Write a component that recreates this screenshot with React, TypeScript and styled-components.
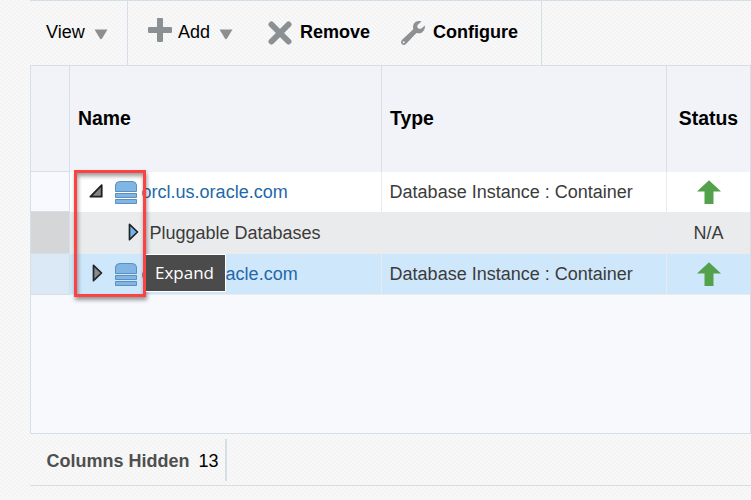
import React from "react";
import styled, { createGlobalStyle } from "styled-components";

const GlobalStyle = createGlobalStyle`
  * { box-sizing: border-box; }
  body { margin: 0; overflow: hidden; }
`;

const Page = styled.div`
  width: 751px;
  height: 500px;
  padding-left: 30px;
  overflow: hidden;
  font: 18px/20px "Liberation Sans", Arial, sans-serif;
  color: #000;
  background: linear-gradient(45deg, #f3f3f3 25%, #f9f9f9 25% 50%, #f3f3f3 50% 75%, #f9f9f9 75%) 0 0 / 4px 4px;
`;

const Toolbar = styled.div`
  display: flex;
  height: 65px;
  border-top: 1px solid #d6dfe6;
`;

const ToolGroup = styled.div<{ $width: number; $pad: number }>`
  display: flex;
  align-items: flex-start;
  width: ${(p) => p.$width}px;
  padding: 21px 0 0 ${(p) => p.$pad}px;
  border-right: 1px solid #d6dfe6;
`;

const ToolButton = styled.div<{ $bold?: boolean; $width: number }>`
  display: flex;
  flex: none;
  width: ${(p) => p.$width}px;
  white-space: nowrap;
  font-weight: ${(p) => (p.$bold ? 700 : 400)};
`;

const ToolIcon = styled.svg<{ $top: number; $gap: number }>`
  flex: none;
  display: block;
  width: 24px;
  height: 24px;
  margin: ${(p) => p.$top}px ${(p) => p.$gap}px 0 0;
`;

const Caret = styled.svg`
  display: block;
  width: 14px;
  height: 11px;
  margin: 7px 0 0 9px;
`;

const Table = styled.div`
  position: relative;
  height: 369px;
  background: #f7f9fd;
  border: 1px solid #d6dfe6;
`;

const Row = styled.div<{ $height: number; $bg: string; $color?: string }>`
  display: grid;
  grid-template-columns: 39px 312px 285px 83px;
  height: ${(p) => p.$height}px;
  background: ${(p) => p.$bg};
  color: ${(p) => p.$color ?? "#3b3b3b"};
`;

const HeadCell = styled.div<{ $center?: boolean }>`
  display: flex;
  align-items: center;
  justify-content: ${(p) => (p.$center ? "center" : "flex-start")};
  padding: 0 0 2px ${(p) => (p.$center ? 0 : 8)}px;
  font-size: 19.4px;
  font-weight: 700;
  border-right: 1px solid #d6dfe6;
  &:last-child { border-right: 0; }
`;

const RowHead = styled.div<{ $bg: string }>`
  background: ${(p) => p.$bg};
  border-right: 1px solid #d6dfe6;
  border-bottom: 1px solid #d6dfe6;
`;

const Cell = styled.div<{ $indent?: number; $center?: boolean; $ruled?: boolean }>`
  display: flex;
  align-items: center;
  justify-content: ${(p) => (p.$center ? "center" : "flex-start")};
  padding-left: ${(p) => (p.$center ? 0 : p.$indent ?? 7.6)}px;
  padding-bottom: ${(p) => (p.$ruled ? 1 : 0)}px;
  border-right: 1px solid #e9ebee;
  border-bottom: ${(p) => (p.$ruled ? "1px solid #e9ebee" : "0")};
  white-space: nowrap;
  &:last-child { border-right: 0; }
`;

const Link = styled.a`
  color: #2467aa;
  margin-left: 4.6px;
`;

const LinkTail = styled.a`
  color: #2467aa;
  margin-left: 74px;
`;

const Glyph = styled.svg<{ $gap?: number; $lift?: number }>`
  display: block;
  flex: none;
  margin-right: ${(p) => p.$gap ?? 0}px;
  margin-bottom: ${(p) => p.$lift ?? 0}px;
`;

const Highlight = styled.div`
  position: absolute;
  left: 43px;
  top: 104px;
  width: 72px;
  height: 127px;
  border: 3px solid #fc4343;
  box-shadow: 1px 3px 4px rgba(0, 0, 0, 0.4), inset 1px 3px 4px rgba(0, 0, 0, 0.4);
`;

const Tooltip = styled.div`
  position: absolute;
  left: 115px;
  top: 188px;
  width: 80px;
  height: 38px;
  padding-left: 9px;
  border: 1px solid #fff;
  border-left: 0;
  background: #4b4b4b;
  color: #fff;
  font: 17px/36px "Open Sans", "Noto Sans", sans-serif;
`;

const Footer = styled.div`
  display: flex;
  align-items: center;
  height: 52px;
  border-bottom: 1px solid #d6dfe6;
`;

const FooterInfo = styled.div`
  display: flex;
  align-items: center;
  gap: 9px;
  width: 197px;
  height: 42px;
  margin-top: 1px;
  padding: 2px 0 0 16.5px;
  border-right: 2px solid #d6dfe6;
  white-space: nowrap;
`;

const FooterLabel = styled.span`
  color: #4f4f4f;
  font-weight: 700;
`;

const DropCaret = () => (
  <Caret viewBox="0 0 14 11">
    <path d="M.5.5h13L8.2 9.3Q7 11 5.8 9.3Z" fill="#8b8f91" />
  </Caret>
);

const Database = () => (
  <Glyph width="22" height="24" viewBox="0 0 22 24">
    <g fill="#80b5e4" stroke="#5b8fbd">
      <path d="M.5 11.5V5Q.8 1.5 5 1.5H17Q21.2 1.5 21.5 5V11.5Z" />
      <path d="M.5 13.5h21v4H.5z" />
      <path d="M.5 19.5h21v4H.5z" />
    </g>
  </Glyph>
);

const Collapse = () => (
  <Glyph width="15" height="15" viewBox="0 0 15 15" $gap={11} $lift={1}>
    <path d="M12.7 1.2V12.7H1.4Z" fill="#858585" stroke="#202020" strokeWidth="1.8" strokeLinejoin="round" />
  </Glyph>
);

const Expand = ({ fill, gap }: { fill: string; gap: number }) => (
  <Glyph width="11" height="18" viewBox="0 0 11 18" $gap={gap} $lift={2}>
    <path d="M1.5 1.3V16.7L9.5 9Z" fill={fill} stroke="#242424" strokeWidth="1.7" strokeLinejoin="round" />
  </Glyph>
);

const UpArrow = () => (
  <Glyph width="24" height="24" viewBox="0 0 24 24">
    <path d="M12 .2 24 11.5H16.5V24H7.5V11.5H0Z" fill="#54a14c" />
  </Glyph>
);

export default function App() {
  return (
    <>
      <GlobalStyle />
      <Page>
        <Toolbar>
          <ToolGroup $width={98} $pad={16}>
            <ToolButton $width={75}>View<DropCaret /></ToolButton>
          </ToolGroup>
          <ToolGroup $width={414} $pad={20}>
            <ToolButton $width={120}>
              <ToolIcon viewBox="0 0 24 24" $top={-4} $gap={6}>
                <path d="M9.8 0h4.4q.8 0 .8 1v8h8q1 0 1 1v4q0 1-1 1h-8v8q0 1-1 1h-4q-1 0-1-1v-8H1q-1 0-1-1v-4q0-1 1-1h8V1q0-1 .8-1Z" fill="#8b9092" />
              </ToolIcon>
              Add<DropCaret />
            </ToolButton>
            <ToolButton $bold $width={133}>
              <ToolIcon viewBox="0 0 24 24" $top={-1} $gap={8}>
                <path d="M3.5 3.5 20.5 20.5M20.5 3.5 3.5 20.5" stroke="#8b9092" strokeWidth="6" strokeLinecap="round" />
              </ToolIcon>
              Remove
            </ToolButton>
            <ToolButton $bold $width={120}>
              <ToolIcon viewBox="0 0 24 24" $top={-1} $gap={8}>
                <path
                  d="M20.5.4C17 -.6 13.3.6 12.3 4Q11.8 6 12.3 8.3L1.1 18.7Q-.8 20.8.7 23Q2.8 24.9 5 23L15.4 11.9Q18.3 13 21 11.4Q24.7 8.7 23.8 4.5L20.4 7.5Q18.2 8.3 16.8 6.9Q15.6 5.2 17 3.5ZM2.7 20.2a1 1 0 1 1 0 2 1 1 0 0 1 0-2Z"
                  fill="#8d9193"
                  fillRule="evenodd"
                />
              </ToolIcon>
              Configure
            </ToolButton>
          </ToolGroup>
        </Toolbar>

        <Table>
          <Row $height={106} $bg="#f2f3f8" $color="#000">
            <RowHead $bg="#f2f3f8" />
            <HeadCell>Name</HeadCell>
            <HeadCell>Type</HeadCell>
            <HeadCell $center>Status</HeadCell>
          </Row>
          <Row $height={40} $bg="#fff">
            <RowHead $bg="#f7f9fe" />
            <Cell $indent={19}>
              <Collapse />
              <Database />
              <Link>orcl.us.oracle.com</Link>
            </Cell>
            <Cell>Database Instance : Container</Cell>
            <Cell $center><UpArrow /></Cell>
          </Row>
          <Row $height={42} $bg="#eaebed">
            <RowHead $bg="#d5d6d8" />
            <Cell $indent={58}>
              <Expand fill="#75b4e9" gap={10.5} />
              Pluggable Databases
            </Cell>
            <Cell />
            <Cell $center>N/A</Cell>
          </Row>
          <Row $height={41} $bg="#cfe7fb">
            <RowHead $bg="#dbe8f5" />
            <Cell $indent={22} $ruled>
              <Expand fill="#858b93" gap={12} />
              <Database />
              <Link>o</Link>
              <LinkTail>acle.com</LinkTail>
            </Cell>
            <Cell $ruled>Database Instance : Container</Cell>
            <Cell $center $ruled><UpArrow /></Cell>
          </Row>
          <Highlight />
          <Tooltip>Expand</Tooltip>
        </Table>

        <Footer>
          <FooterInfo>
            <FooterLabel>Columns Hidden</FooterLabel>
            <span>13</span>
          </FooterInfo>
        </Footer>
      </Page>
    </>
  );
}
